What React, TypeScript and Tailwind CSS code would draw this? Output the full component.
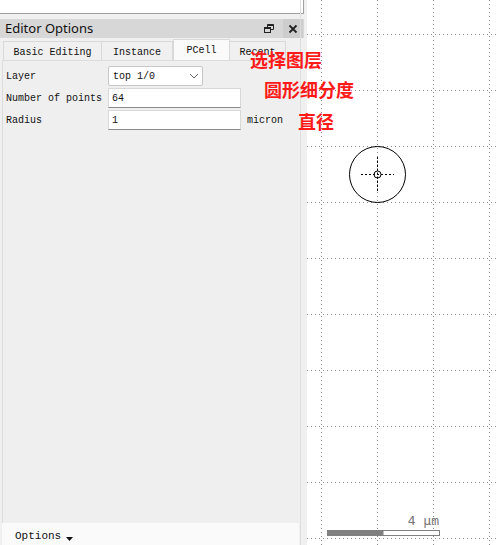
import React from "react";

const mono = { fontFamily: '"Liberation Mono", "DejaVu Sans Mono", monospace' };

function Canvas() {
  const vx = [14, 70, 126, 182];
  const hy: number[] = [];
  for (let y = 34; y < 545; y += 56) hy.push(y);
  return (
    <svg width="191" height="545" className="block">
      <rect width="191" height="545" fill="#ffffff" />
      {vx.map((x) => (
        <line key={"v" + x} x1={x + 0.5} y1={0} x2={x + 0.5} y2={545} stroke="#8a8a8a" strokeWidth={1} strokeDasharray="1 3" />
      ))}
      {hy.map((y) => (
        <line key={"h" + y} x1={0} y1={y + 0.5} x2={191} y2={y + 0.5} stroke="#8a8a8a" strokeWidth={1} strokeDasharray="1 3" />
      ))}
      <circle cx={70.5} cy={174.5} r={28} fill="none" stroke="#000" strokeWidth={1} />
      <circle cx={70.5} cy={174.5} r={3.5} fill="none" stroke="#000" strokeWidth={1} />
      <line x1={54} y1={174.5} x2={87} y2={174.5} stroke="#000" strokeDasharray="2 2" />
      <line x1={70.5} y1={157} x2={70.5} y2={192} stroke="#000" strokeDasharray="2 2" />
      <rect x={20.5} y={530.5} width={112} height={5} fill="#fff" stroke="#808080" />
      <rect x={20.5} y={530.5} width={56} height={5} fill="#808080" />
      <text x={132} y={525} textAnchor="end" fill="#777" fontSize="13" fontFamily="DejaVu Sans Mono, monospace">4 µm</text>
    </svg>
  );
}

export default function App() {
  return (
    <div className="w-[498px] h-[545px] bg-[#f0f0f0] flex overflow-hidden relative" style={{ fontFamily: '"Liberation Sans", Arial, sans-serif' }}>
      <div className="w-[304px] flex flex-col shrink-0">
        <div className="h-[14px] bg-white border-r border-b border-[#a0a0a0]" />
        <div className="h-[5px]" />
        <div className="h-[19px] bg-[#d7d7d7] flex items-center pl-[5px] pr-[1px]">
          <span className="text-[13px] text-[#111] flex-1 leading-none" style={{ fontFamily: '"Noto Sans", "Liberation Sans", sans-serif' }}>Editor Options</span>
          <svg width="12" height="12" viewBox="0 0 12 12" className="mr-[8px]">
            <rect x="1.5" y="4.5" width="6" height="5" fill="none" stroke="#222" />
            <rect x="1.5" y="4.5" width="6" height="1.5" fill="#222" />
            <path d="M4.5 4.5V1.5h6v5H7.5" fill="none" stroke="#222" />
            <rect x="4.5" y="1.5" width="6" height="1.5" fill="#222" />
          </svg>
          <div className="w-[20px] h-[19px] bg-[#cdcdcd] flex items-center justify-center">
            <svg width="10" height="10" viewBox="0 0 10 10">
              <path d="M1.5 1.5L8.5 8.5M8.5 1.5L1.5 8.5" stroke="#222" strokeWidth="1.8" />
            </svg>
          </div>
        </div>
        <div className="w-[300px] flex-1 flex flex-col pl-[2px] pr-[1px]">
          <div className="h-[22px] flex items-end text-[10px] text-[#111]" style={mono}>
            <div className="h-[19px] w-[99px] ml-[1px] bg-[#f0f0f0] border border-b-0 border-[#d9d9d9] flex items-center justify-center pt-[2px]">Basic Editing</div>
            <div className="h-[19px] w-[71px] bg-[#f0f0f0] border border-l-0 border-b-0 border-[#d9d9d9] flex items-center justify-center pt-[2px]">Instance</div>
            <div className="h-[21px] w-[57px] bg-[#fafafa] border border-b-0 border-[#d9d9d9] flex items-center justify-center">PCell</div>
            <div className="h-[19px] w-[56px] bg-[#f0f0f0] border border-l-0 border-b-0 border-[#d9d9d9] flex items-center justify-center pt-[2px]">Recent</div>
          </div>
          <div className="flex-1 bg-[#efefef] border-t border-l border-[#dcdcdc] flex flex-col text-[10px] text-[#111]" style={mono}>
            <div className="flex flex-col gap-[2px] pt-[5px]">
              <div className="flex items-center h-[20px]">
                <span className="w-[105px] pl-[3px]">Layer</span>
                <div className="w-[95px] h-[20px] bg-white border border-[#c8c8c8] rounded-[2px] flex items-center pl-[4px] pr-[3px]">
                  <span className="flex-1">top 1/0</span>
                  <svg width="10" height="6" viewBox="0 0 10 6"><path d="M1 1l4 4 4-4" fill="none" stroke="#666" /></svg>
                </div>
              </div>
              <div className="flex items-center h-[20px]">
                <span className="w-[105px] pl-[3px] whitespace-nowrap">Number of points</span>
                <div className="w-[133px] h-[20px] bg-white border border-[#d8d8d8] border-b-[#8a8a8a] flex items-center pl-[3px]">64</div>
              </div>
              <div className="flex items-center h-[20px]">
                <span className="w-[105px] pl-[3px]">Radius</span>
                <div className="w-[133px] h-[20px] bg-white border border-[#d8d8d8] border-b-[#8a8a8a] flex items-center pl-[3px]">1</div>
                <span className="ml-[6px]">micron</span>
              </div>
            </div>
          </div>
          <div className="h-[22px] bg-[#fafafa] flex items-center pl-[13px] pt-[5px] text-[11px] text-[#111]" style={mono}>
            <span>Options</span>
            <svg width="7" height="4" viewBox="0 0 7 4" className="ml-[5px] mt-[5px]"><path d="M0 0h7L3.5 4z" fill="#111" /></svg>
          </div>
        </div>
      </div>
      <div className="w-[3px] shrink-0 border-l border-[#dedede] -ml-[4px] mr-[4px]" />
      <div className="shrink-0 ml-auto">
        <Canvas />
      </div>
      <div className="absolute left-[250px] top-[48px] text-[#ff1a1a] text-[18px] font-bold leading-[22px]" style={{ fontFamily: '"Noto Sans CJK SC", sans-serif' }}>选择图层</div>
      <div className="absolute left-[264px] top-[78px] text-[#ff1a1a] text-[18px] font-bold leading-[22px]" style={{ fontFamily: '"Noto Sans CJK SC", sans-serif' }}>圆形细分度</div>
      <div className="absolute left-[298px] top-[110px] text-[#ff1a1a] text-[18px] font-bold leading-[22px]" style={{ fontFamily: '"Noto Sans CJK SC", sans-serif' }}>直径</div>
    </div>
  );
}
